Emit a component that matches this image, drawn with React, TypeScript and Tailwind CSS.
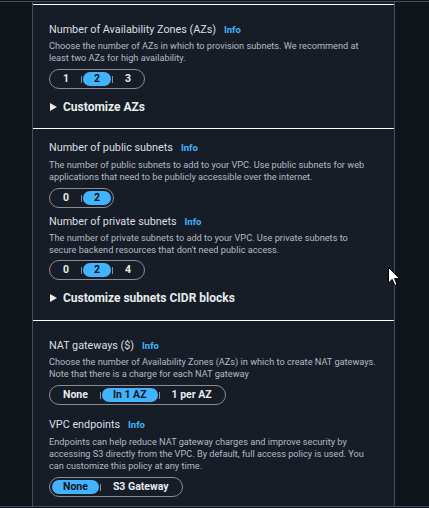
import React from "react";

function Seg({ items, sel }: { items: string[]; sel: number }) {
  return (
    <div className="flex">
      <div className="flex h-[20px] items-center rounded-full border border-[#8c8c94] px-[2px]">
        {items.map((it, i) => (
          <React.Fragment key={i}>
            {i > 0 && <span className="mx-[1px] h-[7px] w-px bg-[#8c8c94]" />}
            <span
              className={
                i === sel
                  ? "flex h-[14px] items-center rounded-full bg-[#42b4ff] px-[11px] text-[10.5px] font-bold leading-none text-[#0f141a]"
                  : "flex h-[14px] items-center px-[11px] text-[10.5px] font-bold leading-none text-[#e9ebed]"
              }
            >
              {it}
            </span>
          </React.Fragment>
        ))}
      </div>
    </div>
  );
}

function Title({ children }: { children: React.ReactNode }) {
  return (
    <div className="flex h-[16px] items-center text-[10.8px] leading-[16px] text-[#dedee3]">
      <span>{children}</span>
      <span className="ml-[8px] text-[9.5px] font-bold text-[#42b4ff]">Info</span>
    </div>
  );
}

function Desc({ children, className = "" }: { children: React.ReactNode; className?: string }) {
  return <p className={"text-[9.2px] leading-[12px] text-[#b4bbc5] " + className}>{children}</p>;
}

function Expand({ children, className = "" }: { children: React.ReactNode; className?: string }) {
  return (
    <div className={"flex h-[16px] items-center " + className}>
      <svg width="7" height="8" viewBox="0 0 7 8" className="ml-[1px]">
        <path d="M0 0 L7 4 L0 8 Z" fill="#e9ebed" />
      </svg>
      <span className="ml-[6px] text-[12px] font-bold leading-[16px] text-[#e9ebed]">{children}</span>
    </div>
  );
}

export default function App() {
  return (
    <div className="relative h-[508px] w-[429px] overflow-hidden bg-[#0f141a] pt-px font-['Roboto',sans-serif]">
      <div className="flex h-[506px] border-y border-[#414d5c]">
        <div className="w-[32px] shrink-0" />
        <div className="w-[363px] shrink-0 border-x border-[#414d5c] bg-[#161d26] pt-[2px]">
          <section className="border-t border-white px-4 pt-[17px] pb-[13px]">
            <Title>Number of Availability Zones (AZs)</Title>
            <Desc className="mt-[2px]">
              Choose the number of AZs in which to provision subnets. We recommend at
              <br />
              least two AZs for high availability.
            </Desc>
            <div className="mt-[5px]">
              <Seg items={["1", "2", "3"]} sel={1} />
            </div>
            <Expand className="mt-[10px]">Customize AZs</Expand>
          </section>
          <section className="border-t border-white px-4 pt-[11px] pb-[14px]">
            <Title>Number of public subnets</Title>
            <Desc className="mt-[3px]">
              The number of public subnets to add to your VPC. Use public subnets for web
              <br />
              applications that need to be publicly accessible over the internet.
            </Desc>
            <div className="mt-[5px]">
              <Seg items={["0", "2"]} sel={1} />
            </div>
            <div className="mt-[6px]">
              <Title>Number of private subnets</Title>
            </div>
            <Desc className="mt-[2px]">
              The number of private subnets to add to your VPC. Use private subnets to
              <br />
              secure backend resources that don't need public access.
            </Desc>
            <div className="mt-[4px]">
              <Seg items={["0", "2", "4"]} sel={1} />
            </div>
            <Expand className="mt-[10px]">Customize subnets CIDR blocks</Expand>
          </section>
          <section className="border-t border-white px-4 pt-[17px]">
            <Title>NAT gateways ($)</Title>
            <Desc className="mt-[2px]">
              Choose the number of Availability Zones (AZs) in which to create NAT gateways.
              <br />
              Note that there is a charge for each NAT gateway
            </Desc>
            <div className="mt-[5px]">
              <Seg items={["None", "In 1 AZ", "1 per AZ"]} sel={1} />
            </div>
            <div className="mt-[12px]">
              <Title>VPC endpoints</Title>
            </div>
            <Desc className="mt-[3px]">
              Endpoints can help reduce NAT gateway charges and improve security by
              <br />
              accessing S3 directly from the VPC. By default, full access policy is used. You
              <br />
              can customize this policy at any time.
            </Desc>
            <div className="mt-[5px]">
              <Seg items={["None", "S3 Gateway"]} sel={0} />
            </div>
          </section>
        </div>
        <div className="flex-1" />
      </div>
      <svg
        className="absolute left-[388px] top-[267px]"
        width="13"
        height="20"
        viewBox="0 0 13 20"
      >
        <path
          d="M0.5 0.5 L0.5 16 L4.2 12.4 L6.8 18.5 L9 17.6 L6.5 11.6 L11.5 11.6 Z"
          fill="#ffffff"
          stroke="#000000"
          strokeWidth="1"
          strokeLinejoin="round"
        />
      </svg>
    </div>
  );
}
